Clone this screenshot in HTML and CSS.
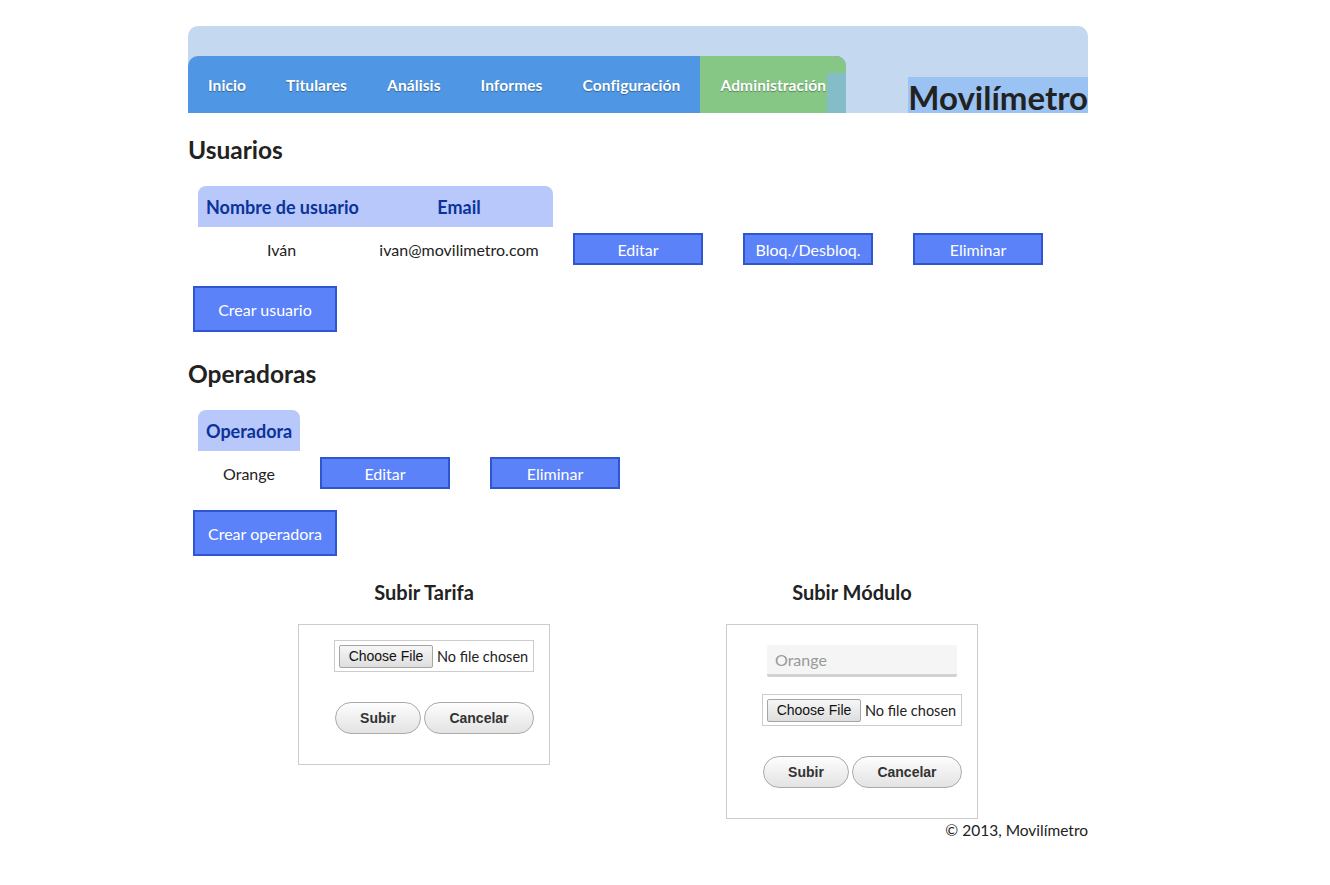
FILE: index.html
```html
<!DOCTYPE html>
<html lang="es">
<head>
<meta charset="utf-8">
<title>Movilímetro</title>
<link rel="stylesheet" href="styles.css">
</head>
<body>
<div class="page">
  <header class="header">
    <nav class="nav">
      <a class="nav-item" href="#">Inicio</a>
      <a class="nav-item" href="#">Titulares</a>
      <a class="nav-item" href="#">Análisis</a>
      <a class="nav-item" href="#">Informes</a>
      <a class="nav-item" href="#">Configuración</a>
      <a class="nav-item nav-active" href="#">Administración</a>
    </nav>
    <h1 class="brand">Movilímetro</h1>
  </header>

  <h2 class="section-title title-users">Usuarios</h2>
  <table class="list list-users">
    <tr>
      <th class="col-name">Nombre de usuario</th>
      <th class="col-email">Email</th>
    </tr>
    <tr>
      <td class="cell-text">Iván</td>
      <td class="cell-text">ivan@movilimetro.com</td>
      <td class="cell-btn"><button class="btn">Editar</button></td>
      <td class="cell-btn"><button class="btn">Bloq./Desbloq.</button></td>
      <td class="cell-btn"><button class="btn">Eliminar</button></td>
    </tr>
  </table>
  <button class="btn btn-big">Crear usuario</button>

  <h2 class="section-title title-ops">Operadoras</h2>
  <table class="list list-ops">
    <tr>
      <th class="col-op">Operadora</th>
    </tr>
    <tr>
      <td class="cell-text">Orange</td>
      <td class="cell-btn"><button class="btn">Editar</button></td>
      <td class="cell-btn"><button class="btn">Eliminar</button></td>
    </tr>
  </table>
  <button class="btn btn-big">Crear operadora</button>

  <div class="uploads">
    <div class="upload-col">
      <h3 class="upload-title">Subir Tarifa</h3>
      <div class="upload-box">
        <div class="file"><span class="file-btn">Choose File</span><span class="file-text">No file chosen</span></div>
        <div class="actions"><button class="pill pill-sm">Subir</button><button class="pill pill-lg">Cancelar</button></div>
      </div>
    </div>
    <div class="upload-col">
      <h3 class="upload-title">Subir Módulo</h3>
      <div class="upload-box">
        <input class="text-input" type="text" placeholder="Orange">
        <div class="file"><span class="file-btn">Choose File</span><span class="file-text">No file chosen</span></div>
        <div class="actions"><button class="pill pill-sm">Subir</button><button class="pill pill-lg">Cancelar</button></div>
      </div>
    </div>
  </div>

  <footer class="footer">© 2013, Movilímetro</footer>
</div>
</body>
</html>
```

FILE: styles.css
```css
* { box-sizing: border-box; }
body {
  margin: 0;
  font-family: Lato, "Liberation Sans", sans-serif;
  color: #222;
  background: #fff;
}
.page {
  width: 900px;
  margin: 26px 0 0 188px;
}
.header {
  height: 87px;
  background: #c4d8ef;
  border-radius: 10px 10px 0 0;
  display: flex;
  align-items: flex-end;
}
.nav {
  display: flex;
  height: 57px;
  background: #4f97e4;
  border-radius: 10px 10px 0 0;
}
.nav-item {
  display: block;
  height: 57px;
  line-height: 58px;
  padding: 0 20px;
  color: #fff;
  font-weight: bold;
  font-size: 15.5px;
  letter-spacing: 0.1px;
  text-decoration: none;
  text-shadow: 0 1px 1px rgba(0,0,0,0.35);
}
.nav-active {
  position: relative;
  background: #86c786;
  border-radius: 0 10px 0 0;
}
.nav-active::after {
  content: "";
  position: absolute;
  right: 0;
  top: 17px;
  bottom: 0;
  width: 19px;
  background: #84bcc8;
}
.brand {
  margin: 0 0 0 auto;
  background: #9ac2f2;
  font-size: 33px;
  line-height: 40px;
  height: 36px;
  font-weight: bold;
  color: #222;
}
.section-title {
  font-size: 24.5px;
  line-height: 29px;
  font-weight: bold;
}
.title-users { margin: 22px 0 22px; }
.title-ops { margin: 27px 0 22px; }
.list {
  border-collapse: collapse;
  table-layout: fixed;
  margin-left: 10px;
  font-size: 16px;
}
.list-users { width: 865px; }
.list-ops { width: 442px; }
.list th {
  height: 41px;
  background: #b8c8fa;
  color: #0b3399;
  font-size: 18px;
  font-weight: bold;
  padding: 0 8px;
  white-space: nowrap;
}
.list th:first-child { border-top-left-radius: 8px; }
.list th:last-child { border-top-right-radius: 8px; }
.col-name { width: 167px; text-align: left; }
.col-email { width: 188px; text-align: center; }
.col-op { width: 102px; text-align: left; }
.list td {
  height: 44px;
  padding: 0;
  vertical-align: middle;
  white-space: nowrap;
}
.cell-text { text-align: center; }
.cell-btn { width: 170px; text-align: center; }
.btn {
  width: 130px;
  height: 32px;
  background: #5b82f8;
  border: 2px solid #2f56d0;
  color: #fff;
  font-family: Lato, "Liberation Sans", sans-serif;
  font-size: 16px;
  padding: 0;
  cursor: pointer;
}
.btn-big {
  display: block;
  width: 144px;
  height: 46px;
  margin: 15px 0 0 5px;
}
.uploads {
  display: grid;
  grid-template-columns: 472px 384px;
  margin-top: 25px;
}
.upload-col {
  display: flex;
  flex-direction: column;
  align-items: center;
}
.upload-title {
  margin: 0 0 21px;
  font-size: 20px;
  line-height: 22px;
  font-weight: bold;
  color: #222;
}
.upload-box {
  width: 252px;
  border: 1px solid #ccc;
  padding: 15px 0 30px 35px;
}
.text-input {
  display: block;
  width: 190px;
  height: 32px;
  margin: 5px 0 17px 5px;
  border: none;
  border-bottom: 3px solid #d2d2d2;
  border-radius: 2px;
  background: #f5f5f5;
  padding: 0 8px;
  font-family: Lato, "Liberation Sans", sans-serif;
  font-size: 16px;
  color: #333;
}
.text-input::placeholder { color: #999; }
.file {
  display: flex;
  align-items: center;
  width: 200px;
  height: 32px;
  border: 1px solid #ccc;
  padding: 0 4px;
  font-size: 14.5px;
}
.file-btn {
  display: inline-block;
  width: 94px;
  height: 23px;
  line-height: 21px;
  text-align: center;
  border: 1px solid #a5a5a5;
  border-radius: 2px;
  background: linear-gradient(#f6f6f6, #dedede);
  font-family: "Liberation Sans", Arial, sans-serif;
  font-size: 14px;
  color: #111;
  margin-right: 4px;
}
.file-text {
  white-space: nowrap;
  color: #222;
}
.actions {
  display: flex;
  gap: 3px;
  margin: 30px 0 0 1px;
}
.pill {
  height: 32px;
  border: 1px solid #aaa;
  border-radius: 16px;
  background: linear-gradient(#fdfdfd, #e3e3e3);
  font-family: "Liberation Sans", Arial, sans-serif;
  font-weight: bold;
  font-size: 14px;
  color: #333;
  padding: 0;
}
.pill-sm { width: 86px; }
.pill-lg { width: 110px; }
.footer {
  text-align: right;
  font-size: 15.5px;
  line-height: 18px;
  margin-top: 2px;
  color: #222;
}
```
